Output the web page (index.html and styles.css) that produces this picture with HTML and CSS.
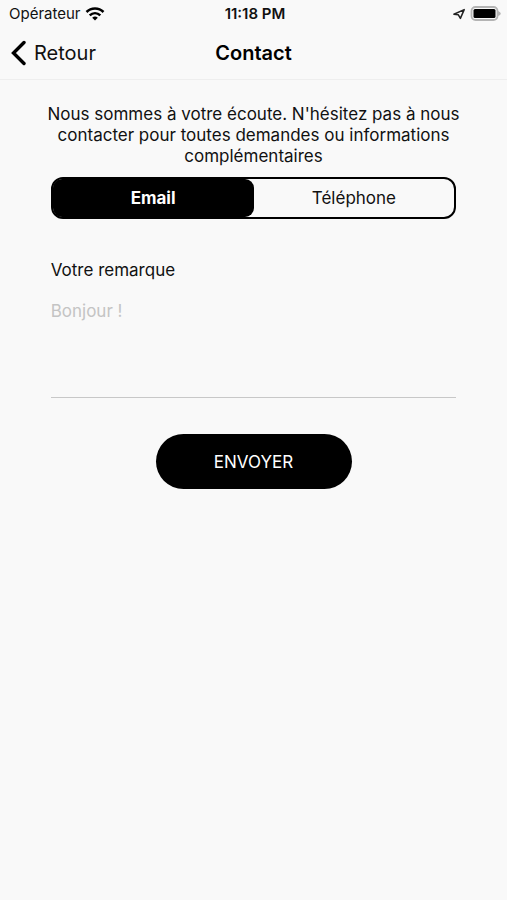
FILE: index.html
```html
<!DOCTYPE html>
<html lang="fr">
<head>
  <meta charset="UTF-8" />
  <meta name="viewport" content="width=device-width, initial-scale=1.0" />
  <title>Contact</title>
  <link rel="stylesheet" href="styles.css">
</head>
<body>
  <div class="status-bar">
    <div class="carrier">
      <span>Opérateur</span>
      <svg class="wifi" viewBox="0 0 20 14" width="20" height="14" aria-hidden="true">
        <path d="M1.5 5C6.2 .3 13.8 .3 18.5 5M4.7 8.4C7.8 5.4 12.2 5.4 15.3 8.4" fill="none" stroke="#000" stroke-width="2.5" />
        <path d="M7.2 10.7Q10 8.5 12.8 10.7L10 13.6Z" />
      </svg>
    </div>
    <div class="time">11:18 PM</div>
    <div class="indicators">
      <svg viewBox="0 0 12 12" width="12" height="12" aria-hidden="true">
        <path d="M11.2 1.6L.9 6.2L5.2 6.7L7.4 10.4Z" fill="none" stroke="#222" stroke-width="1.5" stroke-linejoin="round" />
      </svg>
      <svg viewBox="0 0 31 15" width="31" height="15" aria-hidden="true">
        <rect x="1.5" y="1" width="26" height="13" rx="4" fill="#f9f9f9" stroke="#b4b4b4" stroke-width="1.8" />
        <rect x="3.5" y="3" width="22" height="9" rx="1.5" />
        <path d="M28 5Q30.8 6 30.8 7.5T28 10Z" fill="#b4b4b4" />
      </svg>
    </div>
  </div>

  <header class="navbar">
    <a class="back" href="#">
      <svg viewBox="0 0 16 26" width="16" height="26" aria-hidden="true">
        <path d="M14 2.5L3.5 13L14 23.5" fill="none" stroke="#000" stroke-width="3.4" stroke-linecap="round" stroke-linejoin="miter" />
      </svg>
      <span>Retour</span>
    </a>
    <h1>Contact</h1>
  </header>

  <form class="contact">
    <p class="intro">Nous sommes à votre écoute. N'hésitez pas à nous contacter pour toutes demandes ou informations complémentaires</p>

    <div class="segments">
      <input type="radio" name="mode" id="email" checked />
      <label for="email">Email</label>
      <input type="radio" name="mode" id="telephone" />
      <label for="telephone">Téléphone</label>
    </div>

    <label class="remark-label" for="remark">Votre remarque</label>
    <textarea id="remark" class="remark" placeholder="Bonjour !"></textarea>

    <button type="button" class="send">ENVOYER</button>
  </form>
</body>
</html>
```
FILE: styles.css
```css
* {
  box-sizing: border-box;
}
body {
  font-family: Inter, sans-serif;
  font-size: 17px;
  background-color: #f9f9f9;
  color: #111;
  margin: 0;
}
.status-bar {
  display: grid;
  grid-template-columns: 1fr auto 1fr;
  align-items: center;
  height: 27px;
  padding: 0 6px 0 9px;
  font-size: 15px;
}
.carrier,
.indicators {
  display: flex;
  align-items: center;
  gap: 5px;
}
.carrier {
  gap: 4px;
}
.indicators {
  justify-content: flex-end;
}
.time {
  font-weight: 600;
}
.navbar {
  display: grid;
  grid-template-columns: 1fr auto 1fr;
  align-items: center;
  height: 53px;
  padding: 0 10px;
  border-bottom: 1px solid #eee;
}
.back {
  display: flex;
  align-items: center;
  gap: 8px;
  font-size: 20px;
  color: #111;
  text-decoration: none;
}
h1 {
  margin: 0;
  font-size: 20px;
  font-weight: 600;
  color: #000;
}
.contact {
  display: flex;
  flex-direction: column;
  width: 80%;
  margin: 0 auto;
  padding-top: 24px;
}
.intro {
  margin: 0 -4px 10px;
  line-height: 21px;
  text-align: center;
}
.segments {
  display: flex;
  height: 42px;
  border: 2px solid #000;
  border-radius: 12px;
}
.segments input {
  position: absolute;
  opacity: 0;
}
.segments label {
  display: flex;
  flex: 1;
  align-items: center;
  justify-content: center;
  cursor: pointer;
}
.segments input:checked + label {
  background-color: #000;
  color: #fff;
  font-weight: 700;
  border-radius: 9px;
}
.remark-label {
  margin-top: 41px;
  line-height: 21px;
}
.remark {
  height: 97px;
  margin-top: 20px;
  padding: 0;
  border: none;
  border-bottom: 1px solid #c8c8c8;
  background: none;
  font: inherit;
  line-height: 21px;
  resize: none;
  outline: none;
}
.remark::placeholder {
  color: #c4c4c4;
}
.send {
  align-self: center;
  width: 196px;
  height: 55px;
  margin-top: 36px;
  border: none;
  border-radius: 28px;
  background-color: #000;
  color: #fff;
  font: inherit;
  cursor: pointer;
}
```
